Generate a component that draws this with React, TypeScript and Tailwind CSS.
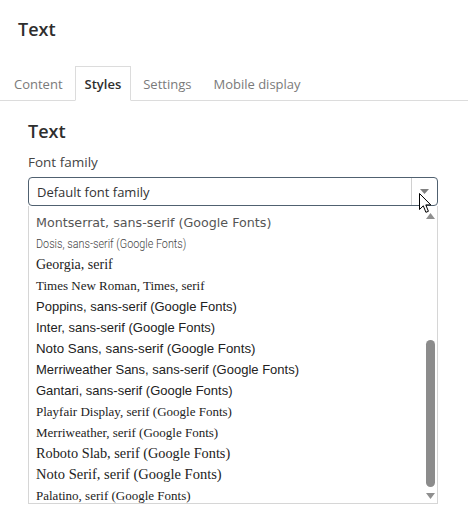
import React from "react";

type Item = { label: string; cls: string };

const items: Item[] = [
  { label: "Montserrat, sans-serif (Google Fonts)", cls: "font-['DejaVu_Sans',sans-serif] text-[12.7px] text-[#555]" },
  { label: "Dosis, sans-serif (Google Fonts)", cls: "font-['Roboto',sans-serif] font-light text-[13.5px] text-[#444] inline-block origin-left scale-x-[0.8] whitespace-nowrap" },
  { label: "Georgia, serif", cls: "font-['Liberation_Serif',serif] text-[14px] text-[#222]" },
  { label: "Times New Roman, Times, serif", cls: "font-['Liberation_Serif',serif] text-[13px] text-[#222]" },
  { label: "Poppins, sans-serif (Google Fonts)", cls: "font-['Liberation_Sans',sans-serif] text-[13px] text-[#222]" },
  { label: "Inter, sans-serif (Google Fonts)", cls: "font-['Liberation_Sans',sans-serif] text-[13px] text-[#222]" },
  { label: "Noto Sans, sans-serif (Google Fonts)", cls: "font-['Liberation_Sans',sans-serif] text-[13.3px] text-[#222]" },
  { label: "Merriweather Sans, sans-serif (Google Fonts)", cls: "font-['Liberation_Sans',sans-serif] text-[13px] text-[#222]" },
  { label: "Gantari, sans-serif (Google Fonts)", cls: "font-['Liberation_Sans',sans-serif] text-[13px] text-[#222]" },
  { label: "Playfair Display, serif (Google Fonts)", cls: "font-['Liberation_Serif',serif] text-[13px] text-[#222]" },
  { label: "Merriweather, serif (Google Fonts)", cls: "font-['Liberation_Serif',serif] text-[13px] text-[#222]" },
  { label: "Roboto Slab, serif (Google Fonts)", cls: "font-['Liberation_Serif',serif] text-[14.3px] text-[#222]" },
  { label: "Noto Serif, serif (Google Fonts)", cls: "font-['Liberation_Serif',serif] text-[14.5px] text-[#222]" },
  { label: "Palatino, serif (Google Fonts)", cls: "font-['Liberation_Serif',serif] text-[13px] text-[#222]" },
];

function Tab({ label, active }: { label: string; active?: boolean }) {
  return (
    <div
      className={
        active
          ? "-mb-px border border-[#dcdcdc] border-b-white bg-white px-[9px] pt-[7px] pb-[6px] text-[13px] leading-[20px] font-semibold text-[#2e2e2e]"
          : "-mb-px border border-transparent px-[9px] pt-[7px] pb-[6px] text-[13px] leading-[20px] text-[#7a7a7a]"
      }
    >
      {label}
    </div>
  );
}

export default function App() {
  return (
    <div className="relative h-[506px] w-[470px] overflow-hidden bg-white font-['Open_Sans',sans-serif] text-[#333]">
      <h1 className="ml-[18px] pt-[17px] text-[18px] leading-[24px] font-semibold text-[#2e2e2e]">Text</h1>

      <div className="mt-[25px] mr-[2px] flex gap-[2px] border-b border-[#dcdcdc] pl-[4px]">
        <Tab label="Content" />
        <Tab label="Styles" active />
        <Tab label="Settings" />
        <Tab label="Mobile display" />
      </div>

      <div className="px-[28px]">
        <h2 className="mt-[18px] text-[18px] leading-[24px] font-semibold text-[#2e2e2e]">Text</h2>
        <div className="mt-[10px] text-[13.5px] leading-[18px] text-[#444]">Font family</div>

        <div className="mt-[6px] flex h-[29px] w-[410px] items-stretch rounded-[4px] border border-[#506170] bg-white">
          <div className="flex flex-1 items-center pl-[8px] text-[13px] leading-[20px] text-[#333]">Default font family</div>
          <div className="flex w-[26px] items-center justify-center border-l border-[#d0d0d0]">
            <svg width="9" height="5" viewBox="0 0 9 5">
              <polygon points="0,0 9,0 4.5,5" fill="#808080" />
            </svg>
          </div>
        </div>

        <div className="flex h-[298px] w-[410px] border-x border-b border-[#d6d6d6] bg-white">
          <div className="flex-1 overflow-hidden">
            <div className="pt-[5px] pl-[7px]">
              {items.map((it) => (
                <div key={it.label} className="h-[21px] whitespace-nowrap leading-[21px]">
                  <span className={it.cls}>{it.label}</span>
                </div>
              ))}
            </div>
          </div>
          <div className="flex w-[12px] flex-col items-start pl-[1px]">
            <svg className="mt-[7px]" width="9" height="6" viewBox="0 0 9 6">
              <polygon points="4.5,0 9,6 0,6" fill="#8f8f8f" />
            </svg>
            <div className="mt-[121px] h-[147px] w-[9px] rounded-full bg-[#8c8c8c]" />
            <svg className="mt-[6px]" width="9" height="6" viewBox="0 0 9 6">
              <polygon points="0,0 9,0 4.5,6" fill="#8f8f8f" />
            </svg>
          </div>
        </div>
      </div>

      <svg className="absolute left-[419px] top-[193px]" width="13" height="21" viewBox="0 0 13 21">
        <path
          d="M0.5 0.5 L0.5 16.5 L4.3 12.8 L6.9 19.3 L9.4 18.3 L6.8 11.9 L11.8 11.9 Z"
          fill="#ffffff"
          stroke="#000000"
          strokeWidth="1"
          strokeLinejoin="miter"
        />
      </svg>
    </div>
  );
}
